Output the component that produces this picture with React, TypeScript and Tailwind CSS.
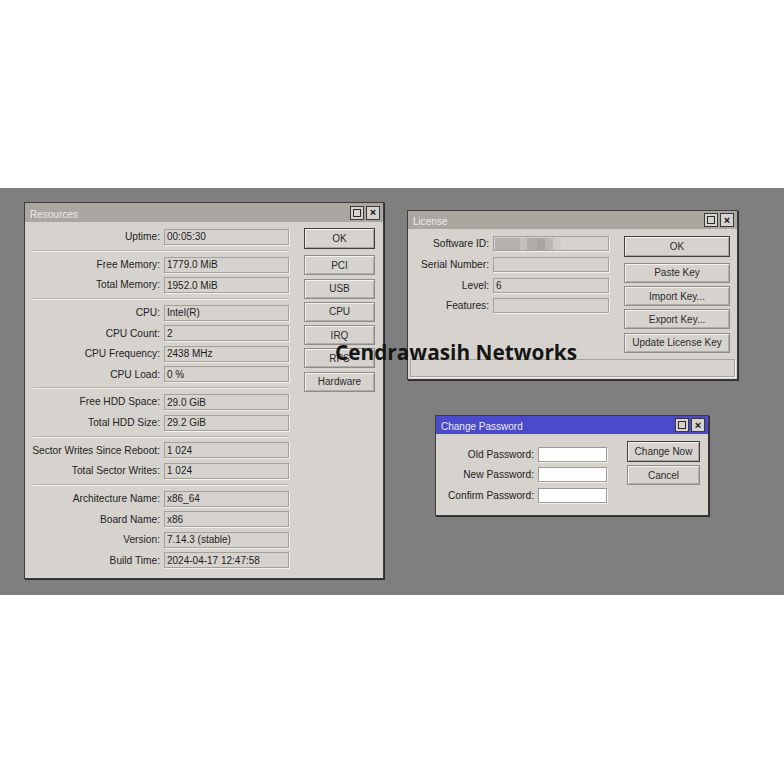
import type { ReactNode } from 'react'

const font = { fontFamily: '"Liberation Sans", Arial, sans-serif' }

function TitleButtons() {
  return (
    <div className="flex gap-[2px]">
      <div className="flex h-[14px] w-[14px] items-center justify-center border border-[#3a3a3a] bg-[#d6d3ce]">
        <div className="h-[8px] w-[8px] border border-[#2a2a2a]" />
      </div>
      <div className="flex h-[14px] w-[14px] items-center justify-center border border-[#3a3a3a] bg-[#d6d3ce] text-[11px] font-bold leading-none text-[#111]">
        ×
      </div>
    </div>
  )
}

function Window({
  left,
  top,
  width,
  height,
  title,
  titleH,
  active,
  children,
}: {
  left: number
  top: number
  width: number
  height: number
  title: string
  titleH: number
  active?: boolean
  children: ReactNode
}) {
  return (
    <div
      className="absolute flex flex-col border border-[#3c3c3c] bg-[#d6d3ce] shadow-[1px_1px_0_#2e2e2e]"
      style={{ left, top, width, height }}
    >
      <div
        className={
          active
            ? 'flex shrink-0 items-center justify-between bg-[#4a4acb] pl-[5px] pr-[3px]'
            : 'flex shrink-0 items-center justify-between bg-[#aaa7a1] pl-[5px] pr-[3px]'
        }
        style={{ height: titleH - 1 }}
      >
        <span className="pt-[3px] text-[10px] text-[#ecebf0]">{title}</span>
        <TitleButtons />
      </div>
      {children}
    </div>
  )
}

function Field({ value, width, white, h = 16 }: { value?: string; width: number; white?: boolean; h?: number }) {
  return (
    <div
      className={
        white
          ? 'flex items-center border border-[#9d9a95] bg-white px-[2px] text-[10px] text-[#1c1c1c] shadow-[1px_1px_0_#f3f1ed]'
          : 'flex items-center border border-[#a3a09b] bg-[#d6d3ce] px-[2px] text-[10px] text-[#1c1c1c] shadow-[1px_1px_0_#f3f1ed]'
      }
      style={{ width, height: h }}
    >
      {value}
    </div>
  )
}

function Row({
  label,
  value,
  labelW,
  fieldW,
  h = 20.5,
  fieldH,
  white,
}: {
  label: string
  value?: string
  labelW: number
  fieldW: number
  h?: number
  fieldH?: number
  white?: boolean
}) {
  return (
    <div className="flex items-center gap-[4px]" style={{ height: h }}>
      <div className="text-right text-[10.2px] text-[#222]" style={{ width: labelW }}>
        {label}
      </div>
      <Field value={value} width={fieldW} white={white} h={fieldH} />
    </div>
  )
}

function Sep() {
  return (
    <div className="flex h-[7.3px] items-center pl-[8px]">
      <div className="h-[2px] w-full border-t border-b border-[#b3b0ab] border-b-[#f1efeb]" />
    </div>
  )
}

function Btn({ children, def, width }: { children: ReactNode; def?: boolean; width: number }) {
  return (
    <div
      className={
        def
          ? 'flex h-[21px] items-center justify-center border border-[#3e3e3e] text-[10px] text-[#2a2a2a] shadow-[inset_1px_1px_0_#f5f3ef,inset_-1px_-1px_0_#a7a49f]'
          : 'flex h-[20px] items-center justify-center border border-[#8f8c87] text-[10px] text-[#2a2a2a] shadow-[inset_1px_1px_0_#f5f3ef,inset_-1px_-1px_0_#b0ada8]'
      }
      style={{ width }}
    >
      {children}
    </div>
  )
}

function Resources() {
  const r = (label: string, value: string) => (
    <Row key={label} label={label} value={value} labelW={135} fieldW={125} />
  )
  return (
    <Window left={24} top={202} width={360} height={377} title="Resources" titleH={20}>
      <div className="flex pt-[4.5px]">
        <div className="flex w-[264px] flex-col">
          {r('Uptime:', '00:05:30')}
          <Sep />
          {r('Free Memory:', '1779.0 MiB')}
          {r('Total Memory:', '1952.0 MiB')}
          <Sep />
          {r('CPU:', 'Intel(R)')}
          {r('CPU Count:', '2')}
          {r('CPU Frequency:', '2438 MHz')}
          {r('CPU Load:', '0 %')}
          <Sep />
          {r('Free HDD Space:', '29.0 GiB')}
          {r('Total HDD Size:', '29.2 GiB')}
          <Sep />
          {r('Sector Writes Since Reboot:', '1 024')}
          {r('Total Sector Writes:', '1 024')}
          <Sep />
          {r('Architecture Name:', 'x86_64')}
          {r('Board Name:', 'x86')}
          {r('Version:', '7.14.3 (stable)')}
          {r('Build Time:', '2024-04-17 12:47:58')}
        </div>
        <div className="ml-[15px] flex flex-col gap-[3.3px] pt-[1px]">
          <div className="mb-[3.5px]">
            <Btn def width={71}>OK</Btn>
          </div>
          <Btn width={71}>PCI</Btn>
          <Btn width={71}>USB</Btn>
          <Btn width={71}>CPU</Btn>
          <Btn width={71}>IRQ</Btn>
          <Btn width={71}>RPS</Btn>
          <Btn width={71}>Hardware</Btn>
        </div>
      </div>
    </Window>
  )
}

function License() {
  return (
    <Window left={407} top={210} width={331} height={170} title="License" titleH={19}>
      <div className="flex flex-1 pt-[4.5px]">
        <div className="flex w-[201px] flex-col">
          <div className="flex h-[20.7px] items-center gap-[4px]">
            <div className="w-[81px] text-right text-[10.2px] text-[#222]">Software ID:</div>
            <div className="flex h-[15px] w-[116px] items-center border border-[#a3a09b] pl-[1px] shadow-[1px_1px_0_#f3f1ed]">
              <div className="h-[12px] w-[25px] bg-[#b4b0ab]" />
              <div className="h-[12px] w-[7px] bg-[#c3c0bb]" />
              <div className="h-[12px] w-[10px] bg-[#b0aca7]" />
              <div className="h-[12px] w-[8px] bg-[#a8a49f]" />
              <div className="h-[12px] w-[8px] bg-[#bab6b1]" />
              <div className="h-[12px] w-[8px] bg-[#cfccc7]" />
            </div>
          </div>
          <Row label="Serial Number:" labelW={81} fieldW={116} h={20.7} fieldH={15} />
          <Row label="Level:" value="6" labelW={81} fieldW={116} h={20.7} fieldH={15} />
          <Row label="Features:" labelW={81} fieldW={116} h={20.7} fieldH={15} />
        </div>
        <div className="ml-[15px] flex flex-col gap-[3.3px] pt-[2.5px]">
          <div className="mb-[2.5px]">
            <Btn def width={106}>OK</Btn>
          </div>
          <Btn width={106}>Paste Key</Btn>
          <Btn width={106}>Import Key...</Btn>
          <Btn width={106}>Export Key...</Btn>
          <Btn width={106}>Update License Key</Btn>
        </div>
      </div>
      <div className="px-[2px] pb-[2px]">
        <div className="h-[18px] w-full border border-[#a8a5a0] shadow-[1px_1px_0_#f3f1ed]" />
      </div>
    </Window>
  )
}

function ChangePassword() {
  return (
    <Window left={435} top={415} width={274} height={101} title="Change Password" titleH={19} active>
      <div className="flex pt-[10px]">
        <div className="flex w-[172px] flex-col">
          <Row label="Old Password:" labelW={98} fieldW={69} h={20.5} fieldH={15} white />
          <Row label="New Password:" labelW={98} fieldW={69} h={20.5} fieldH={15} white />
          <Row label="Confirm Password:" labelW={98} fieldW={69} h={20.5} fieldH={15} white />
        </div>
        <div className="ml-[19px] flex flex-col gap-[3px]">
          <div className="-mt-[3px]">
            <Btn def width={73}>Change Now</Btn>
          </div>
          <Btn width={73}>Cancel</Btn>
        </div>
      </div>
    </Window>
  )
}

export default function App() {
  return (
    <div className="flex h-[784px] w-[784px] flex-col bg-white" style={font}>
      <div className="h-[188px]" />
      <div className="relative h-[407px] w-full bg-[#7f7f7f]">
        <div className="absolute left-0 top-[-188px] h-[784px] w-[784px]">
          <Resources />
          <License />
          <ChangePassword />
          <div
            className="absolute left-[335px] top-[338px] text-[20.8px] font-bold leading-[28px] text-[#151515]"
            style={{ fontFamily: '"Open Sans", "Noto Sans", sans-serif' }}
          >
            Cendrawasih Networks
          </div>
        </div>
      </div>
    </div>
  )
}
